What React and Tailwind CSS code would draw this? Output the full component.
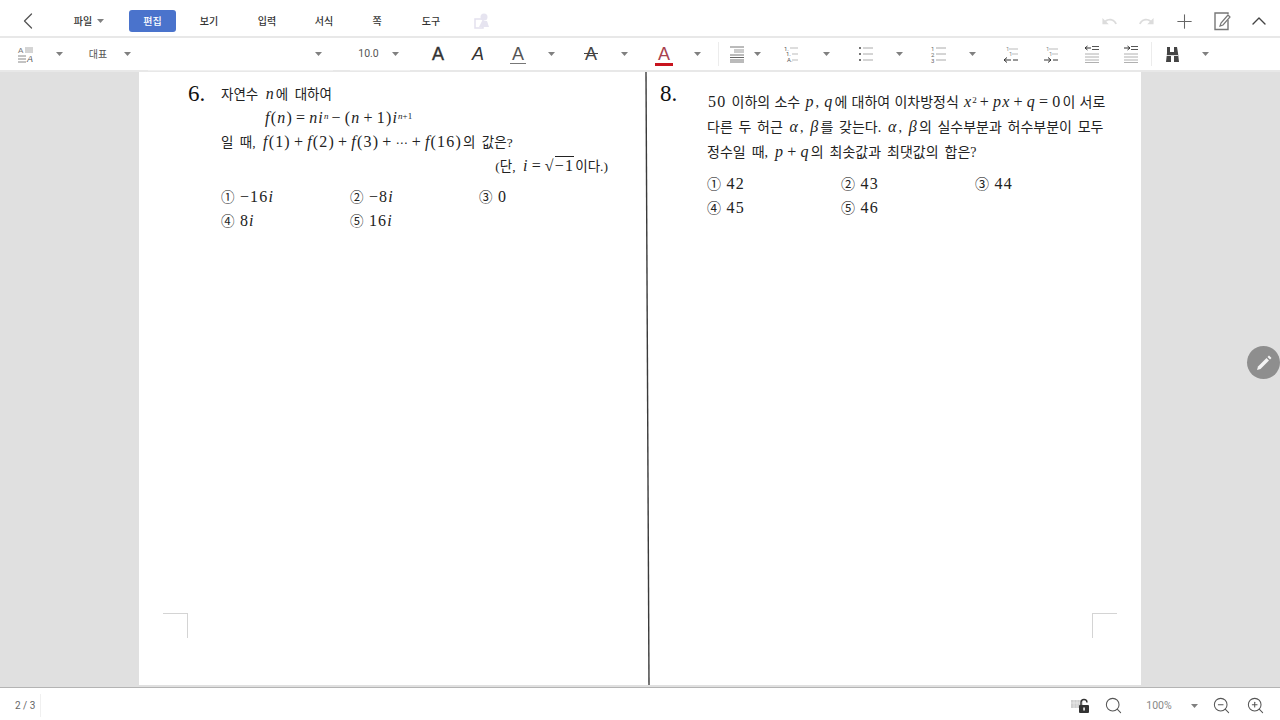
import React from "react";
import { ChevronLeft, ChevronUp, Plus, Search, ZoomIn, ZoomOut } from "lucide-react";
import { MdUndo, MdRedo } from "react-icons/md";

const uiFont = "font-['Roboto','Noto_Sans_CJK_KR',sans-serif]";
const docFont = "font-['Liberation_Serif','Noto_Sans_CJK_KR',serif]";

function Caret({ className = "" }) {
  return (
    <span className={`flex w-[14px] shrink-0 justify-center ${className}`}>
      <svg width="7" height="4" viewBox="0 0 7 4">
        <path d="M0 0h7L3.500 4z" fill="#808080" />
      </svg>
    </span>
  );
}

function Lines({ x = 0, ys = [], w = 12, color = "#8a8a8a" }) {
  return ys.map((y) => <path key={y} d={`M${x} ${y}h${w}`} stroke={color} strokeWidth="1" />);
}

function ToolIcon({ children, className = "" }) {
  return (
    <span className={`flex w-[28px] shrink-0 justify-center ${className}`}>
      <svg width="20" height="20" viewBox="0 0 20 20" fill="none">
        {children}
      </svg>
    </span>
  );
}

function LetterA({ italic, children, className = "" }) {
  return (
    <span
      className={`relative flex w-[40px] shrink-0 justify-center font-['Liberation_Sans',sans-serif] text-[18px] leading-none ${italic ? "italic" : ""} ${className || "text-[#333]"}`}
    >
      A{children}
    </span>
  );
}

// math run inside the Korean text, set a bit larger than the hangul
function M({ children }) {
  return <span className="mx-px text-[16px] tracking-[1.2px] [word-spacing:0]">{children}</span>;
}

function Op({ children }) {
  return <span className="mx-[3px]">{children}</span>;
}

function Sup({ children }) {
  return <sup className="text-[9px] tracking-normal">{children}</sup>;
}

function TopBar() {
  return (
    <div className={`flex h-[38px] shrink-0 items-center border-b-2 border-[#e8e8e8] bg-white pt-[6px] text-[10px] font-medium text-[#333] ${uiFont}`}>
      <div className="flex w-[56px] justify-center">
        <ChevronLeft size={28} strokeWidth={1.1} color="#555" />
      </div>
      <div className="flex w-[64px] items-center justify-center gap-1 pl-[2px]">
        파일 <Caret className="!w-[8px]" />
      </div>
      <div className="ml-[9px] flex h-[22px] w-[47px] items-center justify-center rounded-[3px] bg-[#4a73cc] text-white">편집</div>
      <div className="w-[66px] text-center">보기</div>
      <div className="w-[50px] text-center">입력</div>
      <div className="w-[64px] text-center">서식</div>
      <div className="w-[42px] text-center">쪽</div>
      <div className="w-[66px] text-center">도구</div>
      <div className="flex w-[36px] justify-center">
        <svg width="16" height="18" viewBox="0 0 16 18" fill="none">
          <rect x="1" y="7" width="8" height="9" stroke="#e3e1ee" strokeWidth="1.5" />
          <circle cx="10" cy="5" r="3.5" fill="#e6e4f0" />
          <path d="M5 15l3-6h5l2 6z" fill="#e6e4f0" />
        </svg>
      </div>
      <div className="ml-auto flex items-center pr-[3px]">
        <div className="flex w-[37px] justify-center"><MdUndo size={17} color="#dcdcdc" /></div>
        <div className="flex w-[37px] justify-center"><MdRedo size={17} color="#dcdcdc" /></div>
        <div className="flex w-[38px] justify-center"><Plus size={23} strokeWidth={1.1} color="#666" /></div>
        <div className="flex w-[37px] justify-center">
          <svg width="18" height="20" viewBox="0 0 18 20" fill="none">
            <path d="M15 9v9.5H2V2h13v1" stroke="#777" strokeWidth="1.4" />
            <path d="M7 15l1-3 7-8 2 2-7 8z" fill="#fff" stroke="#777" strokeWidth="1.2" />
          </svg>
        </div>
        <div className="flex w-[37px] justify-center"><ChevronUp size={24} strokeWidth={1.4} color="#444" /></div>
      </div>
    </div>
  );
}

function ToolBar() {
  return (
    <div className={`flex h-[34px] shrink-0 items-center border-b-2 border-[#e8e8e8] bg-white text-[10px] text-[#555] ${uiFont}`}>
      <div className="flex w-[52px] justify-center">
        <svg width="18" height="18" viewBox="0 0 18 18" fill="none">
          <text x="1" y="8" fontSize="8" fill="#777" fontFamily="Liberation Sans">A</text>
          <Lines x={8} ys={[3, 5, 7]} w={8} color="#aaa" />
          <Lines x={1} ys={[11, 14, 17]} w={8} color="#888" />
          <text x="10" y="17" fontSize="9" fontStyle="italic" fill="#555" fontFamily="Liberation Sans">A</text>
        </svg>
      </div>
      <Caret />
      <div className="ml-[10px] w-[44px] text-center">대표</div>
      <Caret />
      <div className="ml-[14px] flex h-[33px] w-[185px] shrink-0 items-center justify-end border-b border-[#f0f0f0] pr-[8px]">
        <Caret />
      </div>
      <div className="ml-[17px] flex h-[33px] w-[60px] shrink-0 items-center border-b border-[#f0f0f0]">
        <span className="w-[37px] text-center text-[10.5px]">10.0</span>
        <Caret className="ml-[1px]" />
      </div>
      <LetterA className="ml-[8px] text-[#333] [-webkit-text-stroke:0.4px_#333]" />
      <LetterA italic />
      <LetterA className="text-[#555]">
        <span className="absolute left-[12px] top-[18px] h-px w-[16px] bg-[#777]" />
      </LetterA>
      <Caret className="ml-[6px]" />
      <LetterA className="ml-[13px] text-[#444]">
        <span className="absolute left-[13px] top-[8px] h-px w-[14px] bg-[#444]" />
      </LetterA>
      <Caret className="ml-[6px]" />
      <LetterA className="ml-[13px] text-[#a8424e]">
        <span className="absolute left-[11px] top-[18px] h-[3px] w-[18px] bg-[#c8141e]" />
      </LetterA>
      <Caret className="ml-[6px]" />
      <span className="ml-[14px] h-[24px] w-px shrink-0 bg-[#ececec]" />
      <ToolIcon className="ml-[5px] !w-[26px]">
        <Lines x={3} ys={[3, 11, 16, 18]} w={14} color="#777" />
        <Lines x={7} ys={[6, 8]} w={10} color="#999" />
        <path d="M3 13.5h14" stroke="#666" />
      </ToolIcon>
      <Caret />
      <ToolIcon className="ml-[12px]">
        <text x="4" y="7" fontSize="6" fill="#555">1.</text>
        <text x="6" y="12" fontSize="6" fill="#555">1.</text>
        <text x="7" y="18" fontSize="6" fill="#555">A.</text>
        <Lines x={10} ys={[4]} w={8} color="#bbb" />
        <Lines x={12} ys={[10, 16]} w={6} color="#bbb" />
      </ToolIcon>
      <Caret className="ml-[15px]" />
      <ToolIcon className="ml-[19px]">
        <circle cx="4" cy="4" r="1" fill="#444" />
        <circle cx="4" cy="10" r="1" fill="#444" />
        <circle cx="4" cy="16" r="1" fill="#444" />
        <Lines x={7} ys={[4, 10, 16]} w={10} color="#aaa" />
      </ToolIcon>
      <Caret className="ml-[12px]" />
      <ToolIcon className="ml-[19px]">
        <text x="2" y="6.5" fontSize="6" fill="#666">1</text>
        <text x="2" y="12.5" fontSize="6" fill="#666">2</text>
        <text x="2" y="18.5" fontSize="6" fill="#666">3</text>
        <Lines x={7} ys={[4, 10, 16]} w={10} color="#aaa" />
      </ToolIcon>
      <Caret className="ml-[12px]" />
      <ToolIcon className="ml-[18px]">
        <text x="5" y="7" fontSize="6" fill="#888">1</text>
        <Lines x={8} ys={[5]} w={9} color="#bbb" />
        <text x="8" y="12" fontSize="6" fill="#888">1</text>
        <Lines x={11} ys={[10]} w={6} color="#bbb" />
        <path d="M10 16H3m3-2.500L3 16l3 2.500M12 16h5" stroke="#333" />
      </ToolIcon>
      <ToolIcon className="ml-[12px]">
        <text x="5" y="7" fontSize="6" fill="#888">1</text>
        <Lines x={8} ys={[5]} w={9} color="#bbb" />
        <text x="8" y="12" fontSize="6" fill="#888">1</text>
        <Lines x={11} ys={[10]} w={6} color="#bbb" />
        <path d="M3 16h7m-3-2.500l3 2.500-3 2.500M12 16h5" stroke="#333" />
      </ToolIcon>
      <ToolIcon className="ml-[13px]">
        <path d="M9 4H3m2.500-2L3 4l2.500 2" stroke="#333" />
        <Lines x={10} ys={[2.5, 5.5]} w={7} color="#555" />
        <Lines x={3} ys={[10, 13, 16, 18.500]} w={14} color="#b0b0b0" />
      </ToolIcon>
      <ToolIcon className="ml-[11px]">
        <path d="M3 4h6m-2.500-2L9 4 6.500 6" stroke="#333" />
        <Lines x={10} ys={[2.5, 5.5]} w={7} color="#555" />
        <Lines x={3} ys={[10, 13, 16, 18.500]} w={14} color="#b0b0b0" />
      </ToolIcon>
      <span className="ml-[6px] h-[24px] w-px shrink-0 bg-[#ececec]" />
      <ToolIcon className="ml-[6px]">
        <path d="M5 3h3v5h4V3h3l1 6 1 9h-5v-6H9v6H4l1-9z" fill="#444" />
        <path d="M4 11.500h12" stroke="#fff" strokeWidth="0.8" />
      </ToolIcon>
      <Caret className="ml-[12px]" />
    </div>
  );
}

function Choices({ rows, cols }) {
  return (
    <div className="flex flex-col gap-[10px] [word-spacing:1px]">
      {rows.map((row, i) => (
        <div key={i} className="flex h-[14px] items-center">
          {row.map((item, j) => (
            <span key={j} className={`${cols} shrink-0`}>{item}</span>
          ))}
        </div>
      ))}
    </div>
  );
}

function LeftPage() {
  return (
    <div className="flex w-[508px] flex-col pb-[47px] pl-[49px] pt-[11px] text-[13.5px] [word-spacing:3px]">
      <div className="flex">
        <span className="w-[33px] shrink-0 text-[23px] leading-[22px] text-[#111]">6.</span>
        <div className="pt-[1px]">
          <p className="h-[24px] leading-[20px]">자연수 <M><i>n</i></M>에 대하여</p>
          <p className="h-[24px] whitespace-nowrap pl-[43px] leading-[20px]">
            <M><i>f</i>(<i>n</i>)<Op>=</Op><i>ni</i><Sup><i>n</i></Sup><Op>−</Op>(<i>n</i><Op>+</Op>1)<i>i</i><Sup><i>n</i>+1</Sup></M>
          </p>
          <p className="h-[24px] whitespace-nowrap leading-[20px]">
            일 때, <M><i>f</i>(1)<Op>+</Op><i>f</i>(2)<Op>+</Op><i>f</i>(3)<Op>+</Op><span className="font-['DejaVu_Sans',sans-serif] text-[12px]">⋯</span><Op>+</Op><i>f</i>(16)</M>의 값은?
          </p>
          <p className="h-[34px] w-[387px] whitespace-nowrap text-right leading-[20px]">
            (단, <M><i>i</i><Op>=</Op>√<span className="border-t border-[#222]">−1</span></M>이다.)
          </p>
          <Choices
            cols="w-[129px]"
            rows={[
              [<>① <M>−16<i>i</i></M></>, <>② <M>−8<i>i</i></M></>, <>③ <M>0</M></>],
              [<>④ <M>8<i>i</i></M></>, <>⑤ <M>16<i>i</i></M></>],
            ]}
          />
        </div>
      </div>
      <div className="-ml-[25px] mt-auto h-[25px] w-[25px] border-r border-t border-[#d4d4d4]" />
    </div>
  );
}

function RightPage() {
  return (
    <div className="flex flex-1 flex-col pb-[47px] pl-[13px] pt-[11px] text-[14px]">
      <div className="flex">
        <span className="w-[47px] shrink-0 text-[23px] leading-[22px] text-[#111]">8.</span>
        <div className="pt-[9px]">
          <p className="h-[25px] whitespace-nowrap leading-[20px] [word-spacing:0.7px]">
            <M>50</M> 이하의 소수 <M><i>p</i></M>, <M><i>q</i></M>에 대하여 이차방정식 <M><i>x</i><Sup>2</Sup><Op>+</Op><i>px</i><Op>+</Op><i>q</i><Op>=</Op>0</M>이 서로
          </p>
          <p className="h-[25px] whitespace-nowrap leading-[20px] [word-spacing:2.2px]">
            다른 두 허근 <M><i>α</i></M>, <M><i>β</i></M>를 갖는다. <M><i>α</i></M>, <M><i>β</i></M>의 실수부분과 허수부분이 모두
          </p>
          <p className="h-[35px] whitespace-nowrap leading-[20px] [word-spacing:2.5px]">
            정수일 때, <M><i>p</i><Op>+</Op><i>q</i></M>의 최솟값과 최댓값의 합은?
          </p>
          <Choices
            cols="w-[134px]"
            rows={[
              [<>① <M>42</M></>, <>② <M>43</M></>, <>③ <M>44</M></>],
              [<>④ <M>45</M></>, <>⑤ <M>46</M></>],
            ]}
          />
        </div>
      </div>
      <div className="ml-[432px] mt-auto h-[25px] w-[25px] border-l border-t border-[#d4d4d4]" />
    </div>
  );
}

function StatusBar() {
  return (
    <div className={`flex h-[33px] shrink-0 items-center border-t border-[#b4b4b4] bg-white pt-[3px] text-[10px] text-[#666] ${uiFont}`}>
      <span className="ml-[15px] w-[26px] border-r border-[#f0f0f0] py-[4px]">2 / 3</span>
      <div className="ml-auto flex items-center pr-[15px]">
        <svg width="20" height="16" viewBox="0 0 20 16" fill="none">
          <rect x="0" y="2" width="12" height="8" fill="#cfcfcf" />
          <path d="M3 2v8M6 2v8M9 2v8M0 5h12" stroke="#eee" strokeWidth="0.7" />
          <rect x="8" y="7" width="10" height="8" rx="1" fill="#333" />
          <path d="M10 7V4.500a3 3 0 0 1 6 0" stroke="#333" strokeWidth="1.4" />
          <rect x="12.300" y="9.500" width="1.500" height="3" fill="#fff" />
        </svg>
        <Search size={19} strokeWidth={1.3} color="#555" className="ml-[13px]" />
        <span className="ml-[21px] w-[30px] text-center text-[10.5px] text-[#888]">100%</span>
        <Caret className="ml-[13px]" />
        <ZoomOut size={19} strokeWidth={1.3} color="#555" className="ml-[11px]" />
        <ZoomIn size={19} strokeWidth={1.3} color="#555" className="ml-[15px]" />
      </div>
    </div>
  );
}

export default function App() {
  return (
    <div className="flex h-[720px] w-[1280px] flex-col overflow-hidden bg-[#e0e0e0]">
      <TopBar />
      <ToolBar />
      <div className="relative flex-1">
        <div className="flex h-[613px] pl-[139px]">
          <div className={`relative flex h-full w-[1002px] bg-white text-[#222] ${docFont}`}>
            <LeftPage />
            <RightPage />
            <svg className="absolute left-[505px] top-0" width="8" height="613">
              <path d="M2 0L5 613" stroke="#3a3a3a" strokeWidth="1.4" />
            </svg>
          </div>
        </div>
        <div className="absolute right-0 top-[274px] flex h-[33px] w-[33px] items-center justify-center rounded-full bg-[#8e8e8e]">
          <svg width="20" height="20" viewBox="0 0 20 20">
            <path d="M3 17l1-3.500 8.500-8.500 2.500 2.500L6.500 16z" fill="#f4f4f4" />
            <path d="M13.500 4l1.500-1.500 2.500 2.500L16 6.500z" fill="#f4f4f4" />
          </svg>
        </div>
      </div>
      <StatusBar />
    </div>
  );
}
